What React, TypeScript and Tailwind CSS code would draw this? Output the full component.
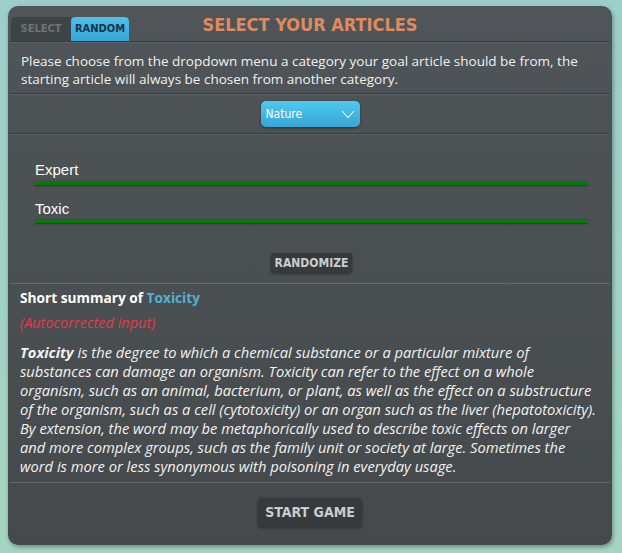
import React from "react";

export default function App() {
  const open = { fontFamily: '"Open Sans", "DejaVu Sans", sans-serif' };
  const cond = { fontFamily: '"DejaVu Sans Condensed", "DejaVu Sans", sans-serif' };
  return (
    <div className="w-[622px] h-[553px] bg-gradient-to-b from-[#9ccfc9] to-[#a4d5c1] pt-[6px] pl-[8px]">
      <div className="w-[604px] h-[539px] rounded-[10px] bg-gradient-to-b from-[#4f5558] to-[#45494b] shadow-[1px_2px_4px_rgba(0,0,0,0.35)] flex flex-col">
        {/* header */}
        <div className="h-[35px] grid grid-cols-[1fr_auto_1fr] items-end">
          <div className="flex items-end pl-[3px]">
            <div className="flex h-[24px] rounded-t-[4px] bg-[#3e4345] overflow-hidden" style={cond}>
              <div className="w-[60px] flex items-center justify-center text-[11px] font-bold text-[#6e7375]">SELECT</div>
              <div className="w-[58px] flex items-center justify-center text-[11px] font-bold text-[#163447] bg-gradient-to-b from-[#4fc0ea] to-[#36a6d8] rounded-t-[4px]">RANDOM</div>
            </div>
          </div>
          <div className="self-center text-[18px] font-bold text-[#df8a5f] pt-[2px]" style={cond}>SELECT YOUR ARTICLES</div>
          <div />
        </div>
        <div className="mx-[2px] h-[2px] border-t border-[#383c3e] border-b border-b-[#596062]" />
        {/* intro */}
        <div className="px-[13px] pt-[9px] pb-[5px] text-[13.5px] leading-[18px] text-[#f0f0f0]" style={open}>
          Please choose from the dropdown menu a category your goal article should be from, the starting article will always be chosen from another category.
        </div>
        <div className="mx-[2px] h-[2px] border-t border-[#383c3e] border-b border-b-[#596062]" />
        {/* dropdown */}
        <div className="flex justify-center pt-[6px] pb-[6px]">
          <div className="w-[99px] h-[26px] rounded-[5px] bg-gradient-to-b from-[#4ecaef] to-[#38a4d5] shadow-[0_1px_3px_rgba(0,0,0,0.4)] flex items-center justify-between pl-[5px] pr-[5px]" style={cond}>
            <span className="text-[12px] text-white">Nature</span>
            <svg width="14" height="9" viewBox="0 0 14 9" fill="none">
              <path d="M1 1 L7 7.5 L13 1" stroke="white" strokeWidth="1.1" />
            </svg>
          </div>
        </div>
        <div className="mx-[2px] h-[2px] border-t border-[#383c3e] border-b border-b-[#596062]" />
        {/* inputs */}
        <div className="flex flex-col pt-[26px] pb-[10px] pl-[27px] pr-[24px]" style={{ fontFamily: '"Liberation Sans", Arial, sans-serif' }}>
          <div className="text-[15px] leading-[18px] text-white">Expert</div>
          <div className="mt-[2px] h-[4px] bg-[#087808] shadow-[0_1px_2px_rgba(0,0,0,0.4)]" />
          <div className="mt-[15px] text-[15px] leading-[18px] text-white">Toxic</div>
          <div className="mt-[1px] h-[4px] bg-[#087808] shadow-[0_1px_2px_rgba(0,0,0,0.4)]" />
          <div className="flex justify-center mt-[30px]">
            <div className="h-[20px] px-[4px] rounded-[3px] bg-[#363a3c] shadow-[0_1px_3px_rgba(0,0,0,0.4)] flex items-center text-[12px] font-bold text-[#c9cdd0]" style={cond}>RANDOMIZE</div>
          </div>
        </div>
        <div className="mx-[2px] h-[1px] bg-[#656a6c]" />
        {/* summary */}
        <div className="pl-[12px] pr-[14px] pt-[5px] pb-[6px] text-white" style={open}>
          <div className="leading-[18px] text-[13.7px] font-bold">Short summary of <span className="text-[#4fb2d3]">Toxicity</span></div>
          <div className="mt-[7px] leading-[18px] text-[14.5px] italic text-[#e33b4c]">(Autocorrected input)</div>
          <div className="mt-[11px] leading-[19px] text-[14.7px] italic text-[#f2f2f2]">
            <b>Toxicity</b> is the degree to which a chemical substance or a particular mixture of substances can damage an organism. Toxicity can refer to the effect on a whole organism, such as an animal, bacterium, or plant, as well as the effect on a substructure of the organism, such as a cell (cytotoxicity) or an organ such as the liver (hepatotoxicity). By extension, the word may be metaphorically used to describe toxic effects on larger and more complex groups, such as the family unit or society at large. Sometimes the word is more or less synonymous with poisoning in everyday usage.
          </div>
        </div>
        <div className="mx-[2px] h-[1px] bg-[#656a6c]" />
        <div className="flex justify-center pt-[15px]">
          <div className="h-[29px] px-[7px] rounded-[4px] bg-[#363a3c] shadow-[0_1px_3px_rgba(0,0,0,0.4)] flex items-center text-[14px] font-bold text-[#c9cdd0]" style={cond}>START GAME</div>
        </div>
      </div>
    </div>
  );
}
